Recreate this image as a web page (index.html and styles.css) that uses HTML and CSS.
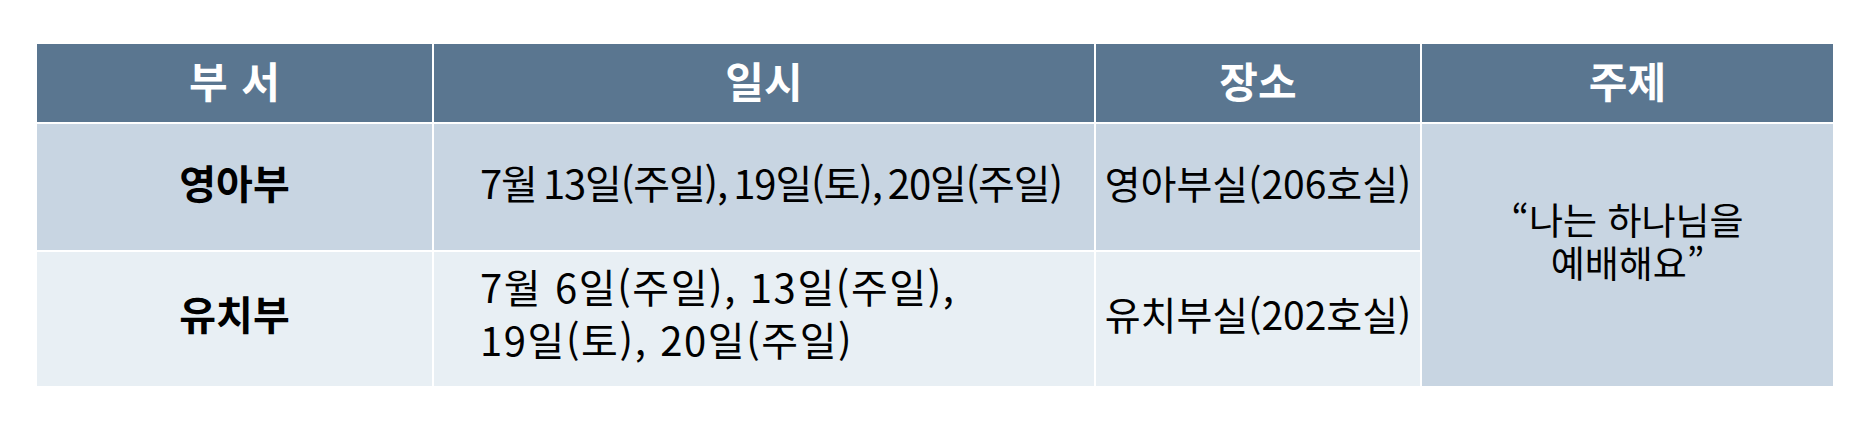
FILE: index.html
```html
<!DOCTYPE html>
<html lang="ko">
<head>
<meta charset="utf-8">
<title>여름성경학교 일정</title>
<link rel="stylesheet" href="styles.css">
</head>
<body>
<table class="schedule">
  <colgroup>
    <col class="c-dept">
    <col class="c-date">
    <col class="c-place">
    <col class="c-theme">
  </colgroup>
  <thead>
    <tr class="row-head">
      <th class="head-dept">부 서</th>
      <th>일시</th>
      <th>장소</th>
      <th>주제</th>
    </tr>
  </thead>
  <tbody>
    <tr class="row-a">
      <td class="dept">영아부</td>
      <td class="date date-tight">7월 13일(주일), 19일(토), 20일(주일)</td>
      <td class="place">영아부실(206호실)</td>
      <td class="theme" rowspan="2">“나는 하나님을<br>예배해요”</td>
    </tr>
    <tr class="row-b">
      <td class="dept">유치부</td>
      <td class="date date-wide">7월 6일(주일), 13일(주일),<br>19일(토), 20일(주일)</td>
      <td class="place">유치부실(202호실)</td>
    </tr>
  </tbody>
</table>
</body>
</html>
```

FILE: styles.css
```css
html, body {
  margin: 0;
  padding: 0;
  background: #ffffff;
}

body {
  font-family: "Noto Sans CJK KR", "Noto Sans", sans-serif;
  color: #000000;
}

.schedule {
  margin: 42px 0 0 35px;
  border-collapse: separate;
  border-spacing: 2px;
  table-layout: fixed;
  width: 1800px;
}

.c-dept { width: 395px; }
.c-date { width: 660px; }
.c-place { width: 324px; }
.c-theme { width: 411px; }

.schedule th,
.schedule td {
  padding: 0;
  vertical-align: middle;
}

.row-head { height: 78px; }
.row-a { height: 126px; }
.row-b { height: 134px; }

.schedule .row-head th {
  background: #5a7690;
  color: #ffffff;
  font-weight: 700;
  font-size: 42px;
  line-height: 50px;
  text-align: center;
  padding-bottom: 6px;
}

.schedule .row-head .head-dept {
  word-spacing: 2px;
}

.row-a td { background: #c8d5e2; }
.row-b td { background: #e8eff4; }

.schedule td.dept {
  text-align: center;
  font-weight: 700;
  font-size: 40px;
  line-height: 48px;
}

.schedule .row-a td.dept,
.schedule .row-a td.place {
  padding-bottom: 10px;
}

.schedule .row-b td.dept,
.schedule .row-b td.place {
  padding-bottom: 12px;
}

.schedule td.date {
  text-align: left;
  padding-left: 46px;
  font-size: 40px;
  line-height: 53px;
}

.schedule .row-a td.date { padding-bottom: 10px; }
.schedule .row-b td.date { padding-bottom: 12px; }

.date-tight {
  letter-spacing: -1.1px;
  word-spacing: -4px;
}

.date-wide {
  letter-spacing: 1.6px;
}

.schedule td.place {
  text-align: center;
  font-size: 39px;
  line-height: 48px;
}

.schedule td.theme {
  background: #c8d5e2;
  text-align: center;
  font-size: 37px;
  line-height: 43px;
  padding-bottom: 28px;
}
```
